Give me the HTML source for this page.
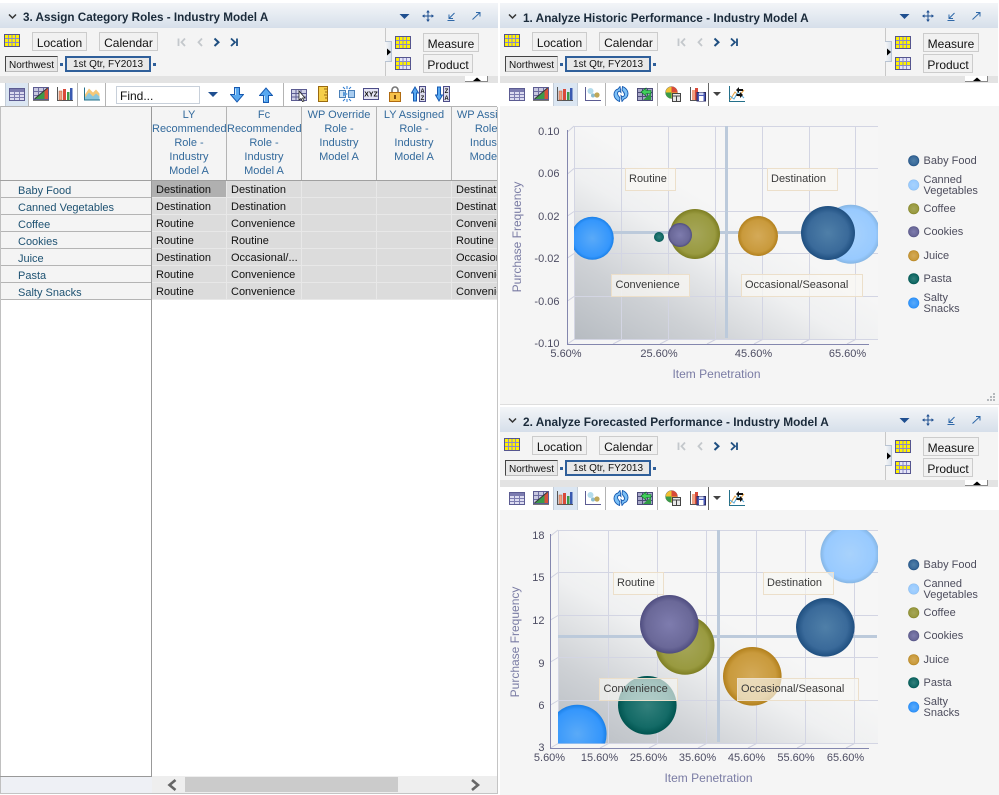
<!DOCTYPE html>
<html><head><meta charset="utf-8">
<style>
html,body{margin:0;padding:0;background:#fff}
body{width:999px;height:795px;position:relative;overflow:hidden;font-family:"Liberation Sans",sans-serif;font-size:11px}
.a{position:absolute}
.p{position:absolute;left:0;top:0;width:499px;height:107px}
.tb{position:absolute;left:0;top:3px;width:498px;height:25px;background:linear-gradient(#f3f5f8,#d6dfea)}
.ttl{position:absolute;left:23px;top:11px;font:bold 11.8px/14px "Liberation Sans",sans-serif;color:#1a2a3a;white-space:nowrap}
.fb{position:absolute;left:0;top:28px;width:498px;height:48px;background:#f4f4f4}
.band{position:absolute;left:0;top:76px;width:498px;height:7px;background:#e3e3e3}
.btn{position:absolute;box-sizing:border-box;border:1px solid #ccc;background:#f1f1f1;font-size:12px;line-height:21px;text-align:center;color:#111;white-space:nowrap;overflow:hidden}
.s1{position:absolute;left:5px;top:56px;width:53px;height:16px;box-sizing:border-box;border:1px solid #bbb;border-left-color:#444;border-top-color:#444;background:#e8e8e8;font-size:10px;line-height:17px;text-align:center;color:#111;overflow:hidden}
.s2{position:absolute;left:65px;top:56px;width:86px;height:16px;box-sizing:border-box;border:1px solid #2f5f9a;outline:0;box-shadow:inset 0 0 0 1px #2f5f9a;background:#e8e8e8;font-size:10px;line-height:16px;text-align:center;color:#111;overflow:hidden}
.sq{position:absolute;width:3px;height:3px;background:#2f5f9a;top:63px}
.div{position:absolute;left:385px;top:28px;width:1px;height:48px;background:#c8c8c8}
.spl{position:absolute;left:385px;top:41px;width:7px;height:21px;box-sizing:border-box;background:linear-gradient(90deg,#f8f8f8,#d8e0ea);border:1px solid #b8c4d4;border-left:0}
.tab{position:absolute;left:465px;top:76px;width:23px;height:6px;background:#fff;border-right:1px solid #888;border-bottom:1px solid #888;box-sizing:border-box}
svg.i{position:absolute;overflow:visible}
.sep{position:absolute;width:1px;height:23px;top:83px;background:#b4b4b4}
.pr{position:absolute;top:83px;height:23px;background:#dbe6f2;border-left:1px solid #c4cdd8;border-right:1px solid #c4cdd8;box-sizing:border-box}
.hc{position:absolute;top:107px;height:73px;width:75px;box-sizing:border-box;border-right:1px solid #b4b4b4;background:#f4f4f4;text-align:center;color:#336a9c;font-size:11px;line-height:14px;padding-top:1px;overflow:hidden}
.rh{position:absolute;left:1px;width:150px;height:17px;box-sizing:border-box;background:#f4f4f4;border-bottom:1px solid #b4b4b4;padding-left:17px;color:#1e5272;font-size:11px;line-height:21px;overflow:hidden}
.c{position:absolute;height:17px;box-sizing:border-box;background:#dcdcdc;border-right:1px solid #e8e8e8;border-bottom:1px solid #e8e8e8;padding-left:4px;color:#111;font-size:11px;line-height:19px;white-space:nowrap;overflow:hidden}
svg text{font-family:"Liberation Sans",sans-serif}
</style></head><body>

<svg width="0" height="0" style="position:absolute">
<defs>
<symbol id="gy" viewBox="0 0 16 13"><rect x=".5" y=".5" width="15" height="12" fill="#fff200" stroke="#55558f"/><path d="M1 4.500H15M1 8.500H15M4.500 1V12M8 1V12M11.500 1V12" stroke="#8a8ac8" fill="none"/></symbol>
<symbol id="gp" viewBox="0 0 16 13"><rect x=".5" y=".5" width="15" height="12" fill="#e4e4f6" stroke="#55558f"/><rect x="1" y="1" width="3" height="11" fill="#fff200"/><rect x="1" y="5" width="14" height="3" fill="#fff200"/><path d="M1 4.500H15M1 8.500H15M4.500 1V12M8 1V12M11.500 1V12" stroke="#8a8ac8" fill="none"/></symbol>
<symbol id="tbl" viewBox="0 0 16 13"><rect x=".5" y=".5" width="15" height="12" fill="#dcdcf0" stroke="#5c5c92"/><rect x="1" y="1" width="14" height="2" fill="#7c7cb0"/><path d="M1 3.500H15M1 6.500H15M1 9.500H15M5.500 1V12M10.500 1V12" stroke="#7c7cb0" fill="none"/></symbol>
<symbol id="cg" viewBox="0 0 16 14"><rect x=".5" y=".5" width="15" height="12" fill="#c8c8e0" stroke="#5c5c92"/><path d="M1 4.500H15M1 8.500H15M5.500 1V12M10.500 1V12" stroke="#6c6ca0" fill="none"/><path d="M2 12L15 1V12Z" fill="#3a9a4a"/><path d="M11.500 12V4L15 1V12Z" fill="#d8503a"/><path d="M1.500 12L14.500 1" stroke="#333" fill="none"/><path d="M0 13.500H16" stroke="#777"/></symbol>
<symbol id="bars" viewBox="0 0 16 14"><path d="M.5 0V13.500H16" stroke="#555" fill="none"/><rect x="2" y="4" width="3" height="9" fill="#f0a080" stroke="#b06040" stroke-width=".5"/><rect x="6" y="2" width="3" height="11" fill="#d84a3a"/><rect x="10" y="5" width="2.500" height="8" fill="#3a9a4a"/><rect x="13" y="1" width="2.500" height="12" fill="#3a5ab0"/></symbol>
<symbol id="area" viewBox="0 0 16 14"><path d="M.5 1V13.500H16" stroke="#24708a" fill="none"/><path d="M1 8L5 2L9 6L12 3L15.500 7V13H1Z" fill="#f5c878"/><path d="M1 11L5 6L9 10L12 7L15.500 10V13H1Z" fill="#8ac6dc"/></symbol>
<symbol id="dn" viewBox="0 0 14 16"><path d="M4.500 .5H9.500V7.500H13.500L7 15L.5 7.500H4.500Z" fill="#58a8f0" stroke="#1659b0"/><path d="M5.500 1.500V8" stroke="#c4e2fb" fill="none"/></symbol>
<symbol id="up" viewBox="0 0 14 16"><path d="M4.500 15.500H9.500V8.500H13.500L7 1L.5 8.500H4.500Z" fill="#58a8f0" stroke="#1659b0"/><path d="M5.500 9V14" stroke="#c4e2fb" fill="none"/></symbol>
<symbol id="cur" viewBox="0 0 16 14"><rect x=".5" y="1.500" width="15" height="11" fill="#cfd0e6" stroke="#5c5c92"/><path d="M.5 5.500H15.500M.5 9H15.500M5 1.500V12.500M10 1.500V12.500" stroke="#5c5c92" fill="none"/><path d="M8 3L8 12L10 10.500L11.500 13.500L13 13L11.500 10H14Z" fill="#fff" stroke="#222" stroke-width=".8"/></symbol>
<symbol id="rul" viewBox="0 0 10 16"><rect x=".5" y=".5" width="9" height="15" fill="#f6cf4a" stroke="#9a6a10"/><path d="M6 3H9M7 6H9M6 9H9M7 12H9" stroke="#9a6a10" fill="none"/></symbol>
<symbol id="swp" viewBox="0 0 16 16"><rect x=".5" y="4.500" width="6" height="7" fill="#cfe4f6" stroke="#4a80b8"/><rect x="9.500" y="4.500" width="6" height="7" fill="#a9cdf0" stroke="#4a80b8"/><path d="M4 5.500L9 8L4 10.500Z" fill="#5a9ad8"/><path d="M8 0V3M8 13V16M4 1L6 3M12 1L10 3M4 15L6 13M12 15L10 13" stroke="#2a7ad0" fill="none"/></symbol>
<symbol id="xyz" viewBox="0 0 16 12"><rect x=".5" y=".5" width="15" height="11" fill="#e4e4f4" stroke="#4c4c88"/><text x="8" y="8.600" font-size="7" font-weight="bold" text-anchor="middle" fill="#111">XYZ</text></symbol>
<symbol id="lck" viewBox="0 0 12 16"><path d="M3 7V4a3 3 0 0 1 6 0V7" fill="none" stroke="#777" stroke-width="1.600"/><rect x=".5" y="6.500" width="11" height="9" fill="#f6c14a" stroke="#b06a10"/><rect x="5" y="9" width="2" height="4" fill="#7a4a10"/></symbol>
<symbol id="az" viewBox="0 0 15 16"><path d="M2.500 15V7H.5L4 1L7.500 7H5.500V15Z" fill="#58a8f0" stroke="#1659b0"/><rect x="8.500" y=".5" width="6" height="15" fill="#dcdcec" stroke="#4c4c88"/><text x="11.500" y="7" font-size="6" font-weight="bold" text-anchor="middle" fill="#111">A</text><text x="11.500" y="14" font-size="6" font-weight="bold" text-anchor="middle" fill="#111">Z</text></symbol>
<symbol id="za" viewBox="0 0 15 16"><path d="M2.500 1V9H.5L4 15L7.500 9H5.500V1Z" fill="#58a8f0" stroke="#1659b0"/><rect x="8.500" y=".5" width="6" height="15" fill="#dcdcec" stroke="#4c4c88"/><text x="11.500" y="7" font-size="6" font-weight="bold" text-anchor="middle" fill="#111">Z</text><text x="11.500" y="14" font-size="6" font-weight="bold" text-anchor="middle" fill="#111">A</text></symbol>
<symbol id="sct" viewBox="0 0 16 14"><path d="M.5 0V13.500H16" stroke="#5c5c92" fill="none"/><circle cx="5.500" cy="4" r="3" fill="#b4dcec"/><circle cx="8" cy="8.500" r="2" fill="#8abcd0"/><circle cx="12" cy="8" r="2.600" fill="#c0a858"/></symbol>
<symbol id="rf" viewBox="0 0 16 16"><path d="M7 .5L5 3C2.500 3.500 1 6 1 8.500C1 11 2.500 13 4.500 14.500L6.500 15.500L7 12L6 10.500C5 9.500 4.500 8.500 4.500 7.500C4.500 6.500 5.500 5.500 6.500 5.200L8 6.500Z" fill="#7cc0f6" stroke="#1659b0" stroke-width=".9"/><path d="M9 15.500L11 13C13.500 12.500 15 10 15 7.500C15 5 13.500 3 11.500 1.500L9.500 .5L9 4L10 5.500C11 6.500 11.500 7.500 11.500 8.500C11.500 9.500 10.500 10.500 9.500 10.800L8 9.500Z" fill="#7cc0f6" stroke="#1659b0" stroke-width=".9"/></symbol>
<symbol id="gb" viewBox="0 0 16 14"><rect x=".5" y="1.500" width="15" height="12" fill="#a8a8c8" stroke="#4c4c78"/><path d="M.5 5.500H15.500M.5 9.500H15.500M5.500 1.500V13.500M10.500 1.500V13.500" stroke="#4c4c78" fill="none"/><path d="M6 13L14 6V13Z" fill="#2f9a44"/><path d="M4 5L9 1V3.500H14V6.500H9V9Z" fill="#3fd05a" stroke="#0a6a20" stroke-width=".6"/></symbol>
<symbol id="pie" viewBox="0 0 16 16"><circle cx="6.500" cy="6.500" r="6" fill="#f1c030" stroke="#777" stroke-width=".5"/><path d="M6.500 6.500V.5A6 6 0 0 1 12.500 6.500Z" fill="#d84a3a"/><path d="M6.500 6.500L.5 6.500A6 6 0 0 0 6.500 12.500Z" fill="#3a9a4a"/><rect x="7.500" y="7.500" width="8" height="8" fill="#e8e8e8" stroke="#444"/><path d="M7.500 10H15.500M11.500 10V15.500" stroke="#444" fill="none"/></symbol>
<symbol id="sv" viewBox="0 0 16 16"><path d="M.5 1V14.500H15" stroke="#555" fill="none"/><rect x="2" y="4" width="3" height="10" fill="#f0a080"/><rect x="5" y="2" width="3" height="12" fill="#d84a3a"/><rect x="7" y="6.500" width="8.500" height="8.500" fill="#4a5ab8" stroke="#2a2a60"/><rect x="9" y="10" width="4.500" height="5" fill="#fff"/><rect x="9" y="6.500" width="4.500" height="2.500" fill="#cfd6f0"/></symbol>
<symbol id="wh" viewBox="0 0 16 16"><path d="M.5 0V15.500H16" stroke="#24708a" fill="none"/><path d="M1 14L6 6L10 10L15 4" fill="none" stroke="#e8a040"/><path d="M1 10L5 13L9 6L15 12" fill="none" stroke="#58a8d8"/><path d="M7 4L10 1V3H14V5H10V7ZM14 9L11 12V10H7.500V8H11V6Z" fill="#111"/></symbol>
<symbol id="hdr" viewBox="0 0 499 107">
<path d="M9 14.500L12.500 18L16 14.500" fill="none" stroke="#333" stroke-width="1.500"/>
<path d="M399.500 14H409.500L404.500 19Z" fill="#1f4f90"/>
<path d="M428 11V21M423 16H433" fill="none" stroke="#1f4f90"/>
<path d="M426.200 12.500L428 10L429.800 12.500ZM426.200 19.500L428 22L429.800 19.500ZM424.500 14.200L422 16L424.500 17.800ZM431.500 14.200L434 16L431.500 17.800Z" fill="#1f4f90"/>
<path d="M454.500 13L449 18.500M449 14.500V18.500H453M447.500 20.500H454.500" fill="none" stroke="#2f68a8"/>
<path d="M472.500 19.500L480 12.500M476 12.500H480V16.500" fill="none" stroke="#2f68a8"/>
<path d="M178.500 38.500V46M185 38.500L181.500 42.250L185 46" fill="none" stroke="#c4c8cc" stroke-width="1.800"/>
<path d="M202 38.500L198.500 42.250L202 46" fill="none" stroke="#c4c8cc" stroke-width="1.800"/>
<path d="M214.500 38.500L218.500 42.250L214.500 46" fill="none" stroke="#1f4f80" stroke-width="2"/>
<path d="M231 38.500L235 42.250L231 46M237 38.500V46" fill="none" stroke="#1f4f80" stroke-width="1.800"/>
<path d="M387 48.500L391 52L387 55.500Z" fill="#000"/>
<path d="M473 81L477 77.500L481 81Z" fill="#000"/>
</symbol>
<radialGradient id="bb" cx=".5" cy=".5" r=".5"><stop offset="0" stop-color="#4f7fa8"/><stop offset=".75" stop-color="#3a6a9a"/><stop offset="1" stop-color="#1f4f80"/></radialGradient>
<radialGradient id="bc" cx=".5" cy=".5" r=".5"><stop offset="0" stop-color="#a8d2fc"/><stop offset=".85" stop-color="#98caff"/><stop offset="1" stop-color="#86b6e4"/></radialGradient>
<radialGradient id="bf" cx=".5" cy=".5" r=".5"><stop offset="0" stop-color="#a5a659"/><stop offset=".8" stop-color="#999a40"/><stop offset="1" stop-color="#7d7e22"/></radialGradient>
<radialGradient id="bk" cx=".5" cy=".5" r=".5"><stop offset="0" stop-color="#7e7cae"/><stop offset=".8" stop-color="#6a6898"/><stop offset="1" stop-color="#4f4d80"/></radialGradient>
<radialGradient id="bj" cx=".5" cy=".5" r=".5"><stop offset="0" stop-color="#d4aa58"/><stop offset=".8" stop-color="#c99a3c"/><stop offset="1" stop-color="#b2801c"/></radialGradient>
<radialGradient id="bp" cx=".5" cy=".5" r=".5"><stop offset="0" stop-color="#33807c"/><stop offset=".75" stop-color="#136a66"/><stop offset="1" stop-color="#005450"/></radialGradient>
<radialGradient id="bs" cx=".5" cy=".5" r=".5"><stop offset="0" stop-color="#5aaaf8"/><stop offset=".85" stop-color="#3496fc"/><stop offset="1" stop-color="#1a80e8"/></radialGradient>
<linearGradient id="wall" x1="0" y1="1" x2=".85" y2="0"><stop offset="0" stop-color="#b6bbc1"/><stop offset=".22" stop-color="#ced1d5"/><stop offset=".45" stop-color="#eff0f1"/><stop offset=".6" stop-color="#f6f6f6"/><stop offset="1" stop-color="#f6f6f6"/></linearGradient>
</defs>
</svg>

<!-- Panel 3 -->
<div class="p">
<div class="tb"></div><div class="ttl" style="font-size:11.7px">3. Assign Category Roles - Industry Model A</div>
<div class="fb"></div><div class="band"></div><div class="tab"></div>
<div class="div"></div><div class="spl"></div>
<div class="btn" style="left:32px;top:32px;width:55px;height:19px">Location</div>
<div class="btn" style="left:99px;top:32px;width:59px;height:19px">Calendar</div>
<div class="btn" style="left:423px;top:33px;width:56px;height:19px">Measure</div>
<div class="btn" style="left:423px;top:54px;width:50px;height:19px">Product</div>
<div class="s1">Northwest</div><div class="sq" style="left:60px"></div>
<div class="s2">1st Qtr, FY2013</div><div class="sq" style="left:153px"></div>
<svg class="i" style="left:4px;top:34px" width="16" height="13"><use href="#gy"/></svg>
<svg class="i" style="left:395px;top:36px" width="16" height="13"><use href="#gy"/></svg>
<svg class="i" style="left:395px;top:57px" width="16" height="13"><use href="#gp"/></svg>
<svg class="i" style="left:0;top:0" width="499" height="107"><use href="#hdr"/></svg>
<div class="pr" style="left:5px;width:24px"></div>
<div class="sep" style="left:28px"></div><div class="sep" style="left:77px"></div><div class="sep" style="left:105px"></div><div class="sep" style="left:283px"></div>
<svg class="i" style="left:9px;top:88px" width="16" height="13"><use href="#tbl"/></svg>
<svg class="i" style="left:33px;top:87px" width="16" height="14"><use href="#cg"/></svg>
<svg class="i" style="left:57px;top:87px" width="16" height="14"><use href="#bars"/></svg>
<svg class="i" style="left:84px;top:86px" width="16" height="15"><use href="#area"/></svg>
<div class="a" style="left:116px;top:86px;width:84px;height:18px;box-sizing:border-box;border:1px solid #c8d0da;background:#fff;font-size:12px;line-height:18px;padding-left:3px;color:#111">Find...</div>
<svg class="i" style="left:208px;top:92px" width="10" height="6"><path d="M0 0H10L5 5Z" fill="#1f4f90"/></svg>
<svg class="i" style="left:230px;top:87px" width="14" height="16"><use href="#dn"/></svg>
<svg class="i" style="left:259px;top:87px" width="14" height="16"><use href="#up"/></svg>
<svg class="i" style="left:291px;top:88px" width="16" height="14"><use href="#cur"/></svg>
<svg class="i" style="left:318px;top:86px" width="10" height="16"><use href="#rul"/></svg>
<svg class="i" style="left:339px;top:86px" width="16" height="16"><use href="#swp"/></svg>
<svg class="i" style="left:363px;top:88px" width="16" height="12"><use href="#xyz"/></svg>
<svg class="i" style="left:389px;top:86px" width="12" height="16"><use href="#lck"/></svg>
<svg class="i" style="left:411px;top:86px" width="15" height="16"><use href="#az"/></svg>
<svg class="i" style="left:435px;top:86px" width="15" height="16"><use href="#za"/></svg>
</div>

<!-- Grid -->
<div class="a" style="left:0;top:106px;width:497px;height:1px;background:#b4b4b4"></div>
<div class="a" style="left:0;top:106px;width:1px;height:688px;background:#c0c0c0"></div>
<div class="a" style="left:1px;top:107px;width:150px;height:73px;background:#f4f4f4"></div>
<div class="a" style="left:0;top:180px;width:497px;height:1px;background:#a0a0a0"></div>
<div class="a" style="left:151px;top:107px;width:1px;height:669px;background:#999"></div>
<div class="a" style="left:152px;top:107px;width:345px;height:73px;overflow:hidden">
<div class="hc" style="left:0;top:0">LY<br>Recommended<br>Role -<br>Industry<br>Model A</div>
<div class="hc" style="left:75px;top:0">Fc<br>Recommended<br>Role -<br>Industry<br>Model A</div>
<div class="hc" style="left:150px;top:0">WP Override<br>Role -<br>Industry<br>Model A</div>
<div class="hc" style="left:225px;top:0">LY Assigned<br>Role -<br>Industry<br>Model A</div>
<div class="hc" style="left:300px;top:0;border:0">WP Assigned<br>Role -<br>Industry<br>Model A</div>
</div>
<div class="a" style="left:1px;top:181px;width:150px;height:119px">
<div class="rh" style="left:0;top:0">Baby Food</div>
<div class="rh" style="left:0;top:17px">Canned Vegetables</div>
<div class="rh" style="left:0;top:34px">Coffee</div>
<div class="rh" style="left:0;top:51px">Cookies</div>
<div class="rh" style="left:0;top:68px">Juice</div>
<div class="rh" style="left:0;top:85px">Pasta</div>
<div class="rh" style="left:0;top:102px">Salty Snacks</div>
</div>
<div class="a" style="left:152px;top:181px;width:345px;height:119px;overflow:hidden">
<div class="c" style="left:0;top:0;width:75px;background:#b0b0b0">Destination</div><div class="c" style="left:75px;top:0;width:75px">Destination</div><div class="c" style="left:150px;top:0;width:75px"></div><div class="c" style="left:225px;top:0;width:75px"></div><div class="c" style="left:300px;top:0;width:75px">Destination</div>
<div class="c" style="left:0;top:17px;width:75px">Destination</div><div class="c" style="left:75px;top:17px;width:75px">Destination</div><div class="c" style="left:150px;top:17px;width:75px"></div><div class="c" style="left:225px;top:17px;width:75px"></div><div class="c" style="left:300px;top:17px;width:75px">Destination</div>
<div class="c" style="left:0;top:34px;width:75px">Routine</div><div class="c" style="left:75px;top:34px;width:75px">Convenience</div><div class="c" style="left:150px;top:34px;width:75px"></div><div class="c" style="left:225px;top:34px;width:75px"></div><div class="c" style="left:300px;top:34px;width:75px">Convenience</div>
<div class="c" style="left:0;top:51px;width:75px">Routine</div><div class="c" style="left:75px;top:51px;width:75px">Routine</div><div class="c" style="left:150px;top:51px;width:75px"></div><div class="c" style="left:225px;top:51px;width:75px"></div><div class="c" style="left:300px;top:51px;width:75px">Routine</div>
<div class="c" style="left:0;top:68px;width:75px">Destination</div><div class="c" style="left:75px;top:68px;width:75px">Occasional/...</div><div class="c" style="left:150px;top:68px;width:75px"></div><div class="c" style="left:225px;top:68px;width:75px"></div><div class="c" style="left:300px;top:68px;width:75px">Occasional/...</div>
<div class="c" style="left:0;top:85px;width:75px">Routine</div><div class="c" style="left:75px;top:85px;width:75px">Convenience</div><div class="c" style="left:150px;top:85px;width:75px"></div><div class="c" style="left:225px;top:85px;width:75px"></div><div class="c" style="left:300px;top:85px;width:75px">Convenience</div>
<div class="c" style="left:0;top:102px;width:75px">Routine</div><div class="c" style="left:75px;top:102px;width:75px">Convenience</div><div class="c" style="left:150px;top:102px;width:75px"></div><div class="c" style="left:225px;top:102px;width:75px"></div><div class="c" style="left:300px;top:102px;width:75px">Convenience</div>
</div>
<div class="a" style="left:0;top:776px;width:152px;height:1px;background:#999"></div>
<div class="a" style="left:1px;top:777px;width:151px;height:16px;background:#eef0f5"></div>
<div class="a" style="left:152px;top:776px;width:345px;height:17px;background:#eee"></div>
<div class="a" style="left:185px;top:777px;width:213px;height:15px;background:#cbcbcb"></div>
<div class="a" style="left:0;top:793px;width:498px;height:1px;background:#c4c4c4"></div>
<div class="a" style="left:497px;top:107px;width:1px;height:687px;background:#c4c4c4"></div>
<svg class="i" style="left:166px;top:778px" width="320" height="14"><path d="M9.500 2L3.500 7L9.500 12" fill="none" stroke="#666" stroke-width="2.600"/><path d="M306 2L312 7L306 12" fill="none" stroke="#666" stroke-width="2.600"/></svg>

<!-- Panel 1 -->
<div class="a" style="left:500px;top:106px;width:499px;height:298px;background:#f5f5f5"></div>
<div class="p" style="left:500px;top:0">
<div class="tb"></div><div class="ttl">1. Analyze Historic Performance - Industry Model A</div>
<div class="fb"></div><div class="band"></div><div class="tab"></div>
<div class="div"></div><div class="spl"></div>
<div class="btn" style="left:32px;top:32px;width:55px;height:19px">Location</div>
<div class="btn" style="left:99px;top:32px;width:59px;height:19px">Calendar</div>
<div class="btn" style="left:423px;top:33px;width:56px;height:19px">Measure</div>
<div class="btn" style="left:423px;top:54px;width:50px;height:19px">Product</div>
<div class="s1">Northwest</div><div class="sq" style="left:60px"></div>
<div class="s2">1st Qtr, FY2013</div><div class="sq" style="left:153px"></div>
<svg class="i" style="left:4px;top:34px" width="16" height="13"><use href="#gy"/></svg>
<svg class="i" style="left:395px;top:36px" width="16" height="13"><use href="#gy"/></svg>
<svg class="i" style="left:395px;top:57px" width="16" height="13"><use href="#gp"/></svg>
<svg class="i" style="left:0;top:0" width="499" height="107"><use href="#hdr"/></svg>
<div class="pr" style="left:53px;width:25px"></div>
<div class="sep" style="left:105px"></div><div class="sep" style="left:157px"></div><div class="sep" style="left:208px;background:#666"></div>
<svg class="i" style="left:9px;top:88px" width="16" height="13"><use href="#tbl"/></svg>
<svg class="i" style="left:33px;top:87px" width="16" height="14"><use href="#cg"/></svg>
<svg class="i" style="left:57px;top:87px" width="16" height="14"><use href="#bars"/></svg>
<svg class="i" style="left:85px;top:87px" width="16" height="14"><use href="#sct"/></svg>
<svg class="i" style="left:113px;top:86px" width="16" height="16"><use href="#rf"/></svg>
<svg class="i" style="left:137px;top:87px" width="16" height="14"><use href="#gb"/></svg>
<svg class="i" style="left:165px;top:86px" width="16" height="16"><use href="#pie"/></svg>
<svg class="i" style="left:190px;top:86px" width="16" height="16"><use href="#sv"/></svg>
<svg class="i" style="left:213px;top:92px" width="8" height="5"><path d="M0 0H8L4 4Z" fill="#444"/></svg>
<svg class="i" style="left:229px;top:86px" width="16" height="16"><use href="#wh"/></svg>
</div>
<svg class="a" style="left:500px;top:106px" width="499" height="298" viewBox="500 106 499 298">
<defs><clipPath id="c1"><rect x="574" y="126" width="304" height="214"/></clipPath></defs>
<rect x="574" y="126" width="304" height="213.500" fill="url(#wall)"/>
<path d="M574 126.500H878M574 168.500H878M574 211.500H878M574 253.500H878M574 296.500H878M574 339.500H878M574.500 126V340M621.500 126V340M668.500 126V340M715.500 126V340M762.500 126V340M809.500 126V340M855.500 126V340" stroke="#d3d5e3" fill="none"/>
<path d="M567.500 132L574 126M567.500 174L574 168.500M567.500 216L574 211.500M567.500 258L574 253.500M567.500 301L574 296.500M567.500 344L574 339.500M613 344L621.500 339.500M660 344L668.500 339.500M707 344L715.500 339.500M754 344L762.500 339.500M801 344L809.500 339.500M847 344L855.500 339.500" stroke="#cfd1e0" fill="none"/>
<path d="M567.500 130V344.500H869" stroke="#8487ae" fill="none"/>
<rect x="574" y="231" width="304" height="3" fill="#bccadb"/>
<rect x="725" y="126" width="3" height="212" fill="#bccadb"/>
<g clip-path="url(#c1)">
<circle cx="592.300" cy="238.300" r="21.500" fill="url(#bs)"/>
<circle cx="850.700" cy="234.300" r="29.500" fill="url(#bc)"/>
<circle cx="695" cy="234" r="25" fill="url(#bf)"/>
<circle cx="680" cy="235" r="12" fill="url(#bk)"/>
<circle cx="659" cy="237" r="5" fill="url(#bp)"/>
<circle cx="758" cy="236" r="20" fill="url(#bj)"/>
<circle cx="828" cy="233" r="27" fill="url(#bb)"/>
</g>
<g fill="#f8f7f3" fill-opacity=".75" stroke="#ecdfca">
<rect x="625.500" y="168.500" width="50" height="22"/><rect x="767.500" y="168.500" width="70" height="22"/><rect x="611.500" y="274.500" width="78" height="22"/><rect x="741.500" y="274.500" width="121" height="22"/>
</g>
<g font-size="11" fill="#3a3a3a">
<text x="629" y="182">Routine</text><text x="771" y="182">Destination</text><text x="615.500" y="288">Convenience</text><text x="745" y="288">Occasional/Seasonal</text>
</g>
<g font-size="11" fill="#4d4d63" text-anchor="end">
<text x="559.500" y="135">0.10</text><text x="559.500" y="177">0.06</text><text x="559.500" y="220">0.02</text><text x="559.500" y="262">-0.02</text><text x="559.500" y="305">-0.06</text><text x="559.500" y="347">-0.10</text>
</g>
<g font-size="11" fill="#4d4d63" text-anchor="middle">
<text x="566" y="357">5.60%</text><text x="659" y="357">25.60%</text><text x="753.500" y="357">45.60%</text><text x="847.500" y="357">65.60%</text>
</g>
<text x="716.500" y="378" font-size="12" fill="#7a7ca4" text-anchor="middle">Item Penetration</text>
<text transform="translate(521 237) rotate(-90)" font-size="12" fill="#7a7ca4" text-anchor="middle">Purchase Frequency</text>
<circle cx="913.700" cy="160.700" r="5.500" fill="url(#bb)"/><circle cx="913.700" cy="185" r="5.500" fill="url(#bc)"/><circle cx="913.700" cy="208.700" r="5.500" fill="url(#bf)"/><circle cx="913.700" cy="231.700" r="5.500" fill="url(#bk)"/><circle cx="913.700" cy="255.700" r="5.500" fill="url(#bj)"/><circle cx="913.700" cy="278.700" r="5.500" fill="url(#bp)"/><circle cx="913.700" cy="303" r="5.500" fill="url(#bs)"/>
<g font-size="11" fill="#4d4d5d">
<text x="923.500" y="164">Baby Food</text><text x="923.500" y="183">Canned</text><text x="923.500" y="194">Vegetables</text><text x="923.500" y="212">Coffee</text><text x="923.500" y="235">Cookies</text><text x="923.500" y="259">Juice</text><text x="923.500" y="282">Pasta</text><text x="923.500" y="301">Salty</text><text x="923.500" y="312">Snacks</text>
</g>
<path d="M993 393h2v2h-2zM990 396h2v2h-2zM993 396h2v2h-2zM987 399h2v2h-2zM990 399h2v2h-2zM993 399h2v2h-2z" fill="#b4b8bc"/>
</svg>
<div class="a" style="left:500px;top:404px;width:499px;height:1px;background:#dedede"></div>

<!-- Panel 2 -->
<div class="a" style="left:500px;top:510px;width:499px;height:285px;background:#f5f5f5"></div>
<div class="p" style="left:500px;top:404px">
<div class="tb"></div><div class="ttl" style="font-size:11.85px">2. Analyze Forecasted Performance - Industry Model A</div>
<div class="fb"></div><div class="band"></div><div class="tab"></div>
<div class="div"></div><div class="spl"></div>
<div class="btn" style="left:32px;top:32px;width:55px;height:19px">Location</div>
<div class="btn" style="left:99px;top:32px;width:59px;height:19px">Calendar</div>
<div class="btn" style="left:423px;top:33px;width:56px;height:19px">Measure</div>
<div class="btn" style="left:423px;top:54px;width:50px;height:19px">Product</div>
<div class="s1">Northwest</div><div class="sq" style="left:60px"></div>
<div class="s2">1st Qtr, FY2013</div><div class="sq" style="left:153px"></div>
<svg class="i" style="left:4px;top:34px" width="16" height="13"><use href="#gy"/></svg>
<svg class="i" style="left:395px;top:36px" width="16" height="13"><use href="#gy"/></svg>
<svg class="i" style="left:395px;top:57px" width="16" height="13"><use href="#gp"/></svg>
<svg class="i" style="left:0;top:0" width="499" height="107"><use href="#hdr"/></svg>
<div class="pr" style="left:53px;width:25px"></div>
<div class="sep" style="left:105px"></div><div class="sep" style="left:157px"></div><div class="sep" style="left:208px;background:#666"></div>
<svg class="i" style="left:9px;top:88px" width="16" height="13"><use href="#tbl"/></svg>
<svg class="i" style="left:33px;top:87px" width="16" height="14"><use href="#cg"/></svg>
<svg class="i" style="left:57px;top:87px" width="16" height="14"><use href="#bars"/></svg>
<svg class="i" style="left:85px;top:87px" width="16" height="14"><use href="#sct"/></svg>
<svg class="i" style="left:113px;top:86px" width="16" height="16"><use href="#rf"/></svg>
<svg class="i" style="left:137px;top:87px" width="16" height="14"><use href="#gb"/></svg>
<svg class="i" style="left:165px;top:86px" width="16" height="16"><use href="#pie"/></svg>
<svg class="i" style="left:190px;top:86px" width="16" height="16"><use href="#sv"/></svg>
<svg class="i" style="left:213px;top:92px" width="8" height="5"><path d="M0 0H8L4 4Z" fill="#444"/></svg>
<svg class="i" style="left:229px;top:86px" width="16" height="16"><use href="#wh"/></svg>
</div>
<svg class="a" style="left:500px;top:510px" width="499" height="285" viewBox="500 510 499 285">
<defs><clipPath id="c2"><rect x="558" y="530" width="320" height="213.500"/></clipPath></defs>
<rect x="558" y="530" width="320" height="213.500" fill="url(#wall)"/>
<path d="M558 530.500H878M558 572.500H878M558 615.500H878M558 657.500H878M558 700.500H878M558 743.500H878M558.500 530V744M608.500 530V744M657.500 530V744M706.500 530V744M756.500 530V744M805.500 530V744M854.500 530V744" stroke="#d3d5e3" fill="none"/>
<path d="M550.500 536L558 530M550.500 578L558 572.500M550.500 620L558 615.500M550.500 662L558 657.500M550.500 705L558 700.500M550.500 748L558 743.500M600 748L608.500 743.500M649 748L657.500 743.500M698 748L706.500 743.500M748 748L756.500 743.500M797 748L805.500 743.500M846 748L854.500 743.500" stroke="#cfd1e0" fill="none"/>
<path d="M550.500 534V748.500H869" stroke="#8487ae" fill="none"/>
<rect x="558" y="635" width="319" height="3" fill="#bccadb"/>
<rect x="717" y="530" width="3" height="212" fill="#bccadb"/>
<g clip-path="url(#c2)">
<circle cx="577.300" cy="734" r="29.300" fill="url(#bs)"/>
<circle cx="849.700" cy="554" r="29.300" fill="url(#bc)"/>
<circle cx="685" cy="645.300" r="29.500" fill="url(#bf)"/>
<circle cx="669.300" cy="624.300" r="29.300" fill="url(#bk)"/>
<circle cx="752.300" cy="676.300" r="29.300" fill="url(#bj)"/>
<circle cx="647.300" cy="705.300" r="29.300" fill="url(#bp)"/>
<circle cx="825.300" cy="627.300" r="29.300" fill="url(#bb)"/>
</g>
<g fill="#f8f7f3" fill-opacity=".65" stroke="#ecdfca">
<rect x="613.500" y="572.500" width="50" height="22"/><rect x="763.500" y="572.500" width="70" height="22"/><rect x="599.500" y="678.500" width="78" height="22"/><rect x="737.500" y="678.500" width="121" height="22"/>
</g>
<g font-size="11" fill="#3a3a3a">
<text x="617" y="586">Routine</text><text x="767" y="586">Destination</text><text x="603.500" y="692">Convenience</text><text x="741" y="692">Occasional/Seasonal</text>
</g>
<g font-size="11" fill="#4d4d63" text-anchor="end">
<text x="544.500" y="539">18</text><text x="544.500" y="581">15</text><text x="544.500" y="624">12</text><text x="544.500" y="667">9</text><text x="544.500" y="709">6</text><text x="544.500" y="751">3</text>
</g>
<g font-size="11" fill="#4d4d63" text-anchor="middle">
<text x="549.500" y="761">5.60%</text><text x="599.500" y="761">15.60%</text><text x="648.500" y="761">25.60%</text><text x="697.500" y="761">35.60%</text><text x="746.500" y="761">45.60%</text><text x="796" y="761">55.60%</text><text x="845.500" y="761">65.60%</text>
</g>
<text x="708.500" y="782" font-size="12" fill="#7a7ca4" text-anchor="middle">Item Penetration</text>
<text transform="translate(519 642) rotate(-90)" font-size="12" fill="#7a7ca4" text-anchor="middle">Purchase Frequency</text>
<circle cx="913.700" cy="564.700" r="5.500" fill="url(#bb)"/><circle cx="913.700" cy="589" r="5.500" fill="url(#bc)"/><circle cx="913.700" cy="612.700" r="5.500" fill="url(#bf)"/><circle cx="913.700" cy="635.700" r="5.500" fill="url(#bk)"/><circle cx="913.700" cy="659.700" r="5.500" fill="url(#bj)"/><circle cx="913.700" cy="682.700" r="5.500" fill="url(#bp)"/><circle cx="913.700" cy="707" r="5.500" fill="url(#bs)"/>
<g font-size="11" fill="#4d4d5d">
<text x="923.500" y="568">Baby Food</text><text x="923.500" y="587">Canned</text><text x="923.500" y="598">Vegetables</text><text x="923.500" y="616">Coffee</text><text x="923.500" y="639">Cookies</text><text x="923.500" y="663">Juice</text><text x="923.500" y="686">Pasta</text><text x="923.500" y="705">Salty</text><text x="923.500" y="716">Snacks</text>
</g>
</svg>
</body></html>
